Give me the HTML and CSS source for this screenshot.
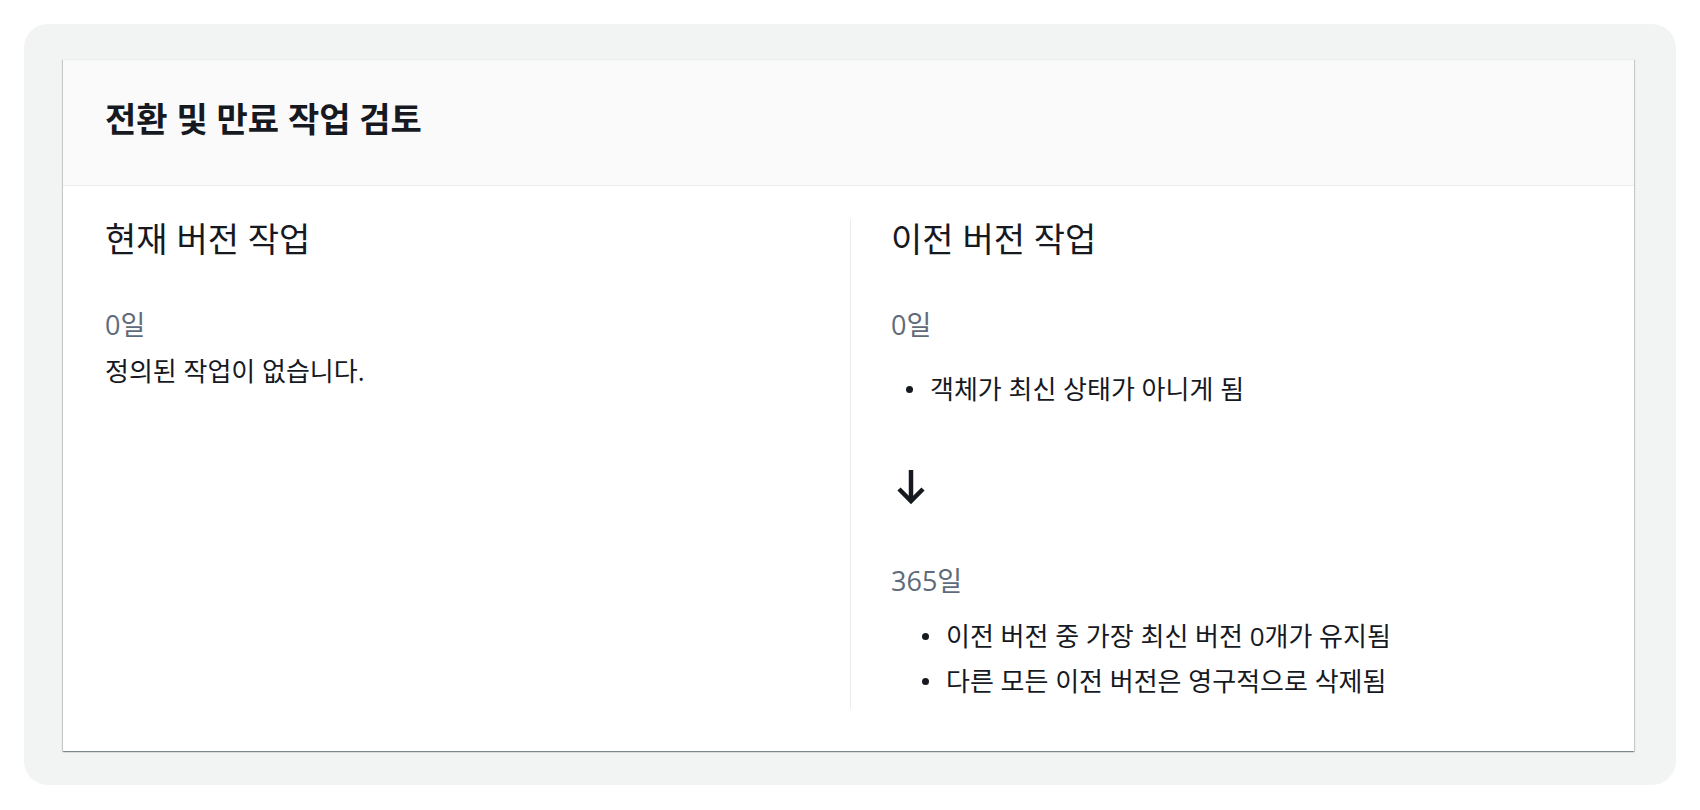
FILE: index.html
```html
<!DOCTYPE html>
<html lang="ko">
<head>
<meta charset="utf-8">
<title>전환 및 만료 작업 검토</title>
<link rel="stylesheet" href="styles.css">
</head>
<body>
<div class="frame">
  <section class="card">
    <header class="card-header">
      <h2 class="card-title">전환 및 만료 작업 검토</h2>
    </header>
    <div class="card-body">
      <div class="col">
        <h3 class="col-title">현재 버전 작업</h3>
        <div class="label">0일</div>
        <p class="text">정의된 작업이 없습니다.</p>
      </div>
      <div class="col col-right">
        <h3 class="col-title">이전 버전 작업</h3>
        <div class="label">0일</div>
        <ul class="list list-first">
          <li>객체가 최신 상태가 아니게 됨</li>
        </ul>
        <div class="arrow">
          <svg width="32" height="36" viewBox="0 0 32 36" aria-hidden="true">
            <path d="M16 1 V32" fill="none" stroke="#16191f" stroke-width="4.5"/>
            <path d="M4 20 L16 32 L28 20" fill="none" stroke="#16191f" stroke-width="4.5" stroke-linejoin="miter"/>
          </svg>
        </div>
        <div class="label label-late">365일</div>
        <ul class="list list-second">
          <li>이전 버전 중 가장 최신 버전 0개가 유지됨</li>
          <li>다른 모든 이전 버전은 영구적으로 삭제됨</li>
        </ul>
      </div>
    </div>
  </section>
</div>
</body>
</html>
```

FILE: styles.css
```css
* { box-sizing: border-box; }

html, body {
  margin: 0;
  padding: 0;
  background: #ffffff;
}

body {
  font-family: "Open Sans", "Noto Sans CJK KR", sans-serif;
  color: #16191f;
}

.frame {
  margin: 24px;
  background: #f2f3f3;
  border-radius: 24px;
  padding: 35px 42px 34px 39px;
}

.card {
  background: #ffffff;
  border-top: 1px solid #eaeded;
  box-shadow: 0 1px 1px 0 rgba(0, 28, 36, 0.3),
              1px 1px 1px 0 rgba(0, 28, 36, 0.15),
              -1px 1px 1px 0 rgba(0, 28, 36, 0.15);
}

.card-header {
  background: #fafafa;
  border-bottom: 1px solid #eaeded;
  padding: 39px 42px 46px 42px;
}

.card-title {
  margin: 0;
  font-size: 34px;
  line-height: 40px;
  font-weight: 700;
  color: #16191f;
}

.card-body {
  display: grid;
  grid-template-columns: 1fr 1fr;
  padding: 33px 39px 42px 42px;
}

.col {
  display: flex;
  flex-direction: column;
  align-items: flex-start;
  padding-bottom: 12px;
}

.col-right {
  border-left: 1px solid #eaeded;
  padding-left: 40px;
}

.col-title {
  margin: 0;
  font-size: 34px;
  line-height: 40px;
  font-weight: 400;
  color: #16191f;
}

.label {
  margin-top: 50px;
  font-size: 27px;
  line-height: 32px;
  color: #5f6b7a;
}

.text {
  margin: 14px 0 0 0;
  font-size: 26px;
  line-height: 32px;
}

.list {
  list-style: none;
  margin: 0;
  padding: 0;
  display: flex;
  flex-direction: column;
  gap: 13px;
}

.list li {
  display: flex;
  align-items: center;
  gap: 17px;
  font-size: 26px;
  line-height: 32px;
}

.list li::before {
  content: "";
  width: 7px;
  height: 7px;
  border-radius: 50%;
  background: #16191f;
  flex: none;
}

.list-first {
  margin-top: 32px;
  padding-left: 15px;
}

.list-second {
  margin-top: 23px;
  padding-left: 31px;
}

.arrow {
  margin-top: 64px;
  padding-left: 4px;
  height: 36px;
  display: flex;
}

.label-late {
  margin-top: 60px;
}
```
